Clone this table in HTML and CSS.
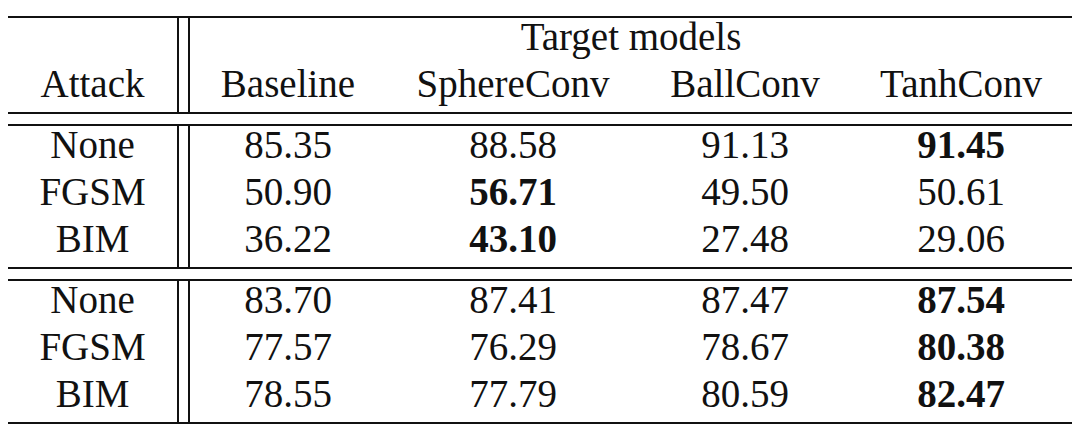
FILE: index.html
```html
<!DOCTYPE html>
<html lang="en">
<head>
<meta charset="utf-8">
<title>Attack results</title>
<link rel="stylesheet" href="styles.css">
</head>
<body>
<table class="results">
  <colgroup>
    <col class="c-attack">
    <col class="c-gap">
    <col class="c-base">
    <col class="c-sphere">
    <col class="c-ball">
    <col class="c-tanh">
  </colgroup>
  <thead>
    <tr class="top">
      <th class="attack head2" rowspan="2">Attack</th>
      <th class="gap" rowspan="2"></th>
      <th class="first" colspan="4">Target models</th>
    </tr>
    <tr class="sub">
      <th class="first">Baseline</th>
      <th>SphereConv</th>
      <th>BallConv</th>
      <th>TanhConv</th>
    </tr>
    <tr class="sep"><td colspan="6"></td></tr>
  </thead>
  <tbody>
    <tr>
      <td class="attack">None</td><td class="gap"></td>
      <td class="first">85.35</td><td>88.58</td><td>91.13</td><td class="best">91.45</td>
    </tr>
    <tr>
      <td class="attack">FGSM</td><td class="gap"></td>
      <td class="first">50.90</td><td class="best">56.71</td><td>49.50</td><td>50.61</td>
    </tr>
    <tr class="last">
      <td class="attack">BIM</td><td class="gap"></td>
      <td class="first">36.22</td><td class="best">43.10</td><td>27.48</td><td>29.06</td>
    </tr>
    <tr class="sep"><td colspan="6"></td></tr>
    <tr>
      <td class="attack">None</td><td class="gap"></td>
      <td class="first">83.70</td><td>87.41</td><td>87.47</td><td class="best">87.54</td>
    </tr>
    <tr>
      <td class="attack">FGSM</td><td class="gap"></td>
      <td class="first">77.57</td><td>76.29</td><td>78.67</td><td class="best">80.38</td>
    </tr>
    <tr class="last end">
      <td class="attack">BIM</td><td class="gap"></td>
      <td class="first">78.55</td><td>77.79</td><td>80.59</td><td class="best">82.47</td>
    </tr>
  </tbody>
</table>
</body>
</html>
```

FILE: styles.css
```css
html, body {
  margin: 0;
  padding: 0;
  background: #ffffff;
}

body {
  padding: 16px 0 0 8px;
  font-family: "Liberation Serif", "Times New Roman", serif;
  color: #111111;
}

.results {
  border-collapse: separate;
  border-spacing: 0;
  table-layout: fixed;
  width: 1064px;
}

.c-attack { width: 171px; }
.c-gap { width: 9px; }
.c-base { width: 198px; }
.c-sphere { width: 254px; }
.c-ball { width: 210px; }
.c-tanh { width: 222px; }

.results th,
.results td {
  box-sizing: border-box;
  padding: 0 0 9px 0;
  font-size: 39px;
  line-height: 38px;
  font-weight: normal;
  text-align: center;
  white-space: nowrap;
}

.results .top th {
  border-top: 2px solid #111111;
}

.results .sub th,
.results .head2 {
  border-bottom: 2px solid #111111;
}

.results .top .gap {
  border-bottom: 2px solid #111111;
}

.results .attack {
  border-right: 2px solid #111111;
  vertical-align: bottom;
}

.results .first {
  border-left: 2px solid #111111;
}

.results .sep td {
  height: 12px;
  padding: 0;
  line-height: 0;
  font-size: 0;
  border-bottom: 2px solid #111111;
}

.results tbody .last td {
  border-bottom: 2px solid #111111;
}

.results .best {
  font-weight: bold;
}
```
